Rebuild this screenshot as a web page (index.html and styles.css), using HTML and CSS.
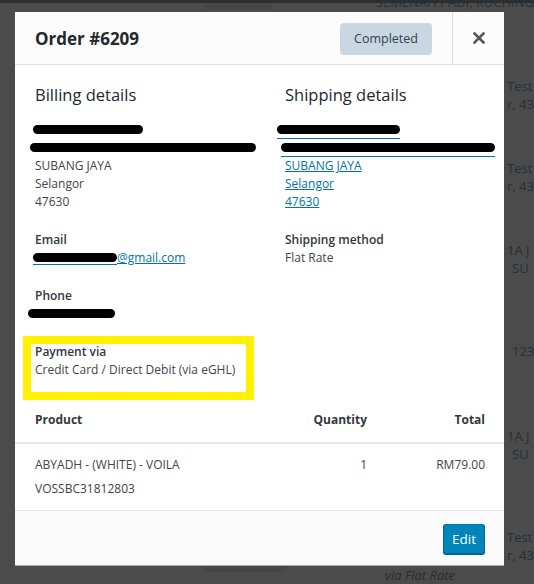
FILE: index.html
```html
<!DOCTYPE html>
<html lang="en">
<head>
    <meta charset="UTF-8">
    <meta name="viewport" content="width=device-width, initial-scale=1.0">
    <title>Order #6209</title>
    <link rel="stylesheet" href="styles.css">
</head>
<body>
    <!-- Orders page behind the overlay -->
    <div class="page">
        <div class="page-top">
            <span class="page-tab"></span>
            <span class="page-addr"><span>SEMENAH PADI, KUCHING</span></span>
        </div>
        <div class="page-list">
            <div class="page-row row-a"><span>Test</span><span>r, 43</span></div>
            <div class="page-row row-a"><span>Test</span><span>r, 43</span></div>
            <div class="page-row row-b"><span>1A J</span><span class="indent">SU</span></div>
            <div class="page-row row-c"><span class="indent">123</span></div>
            <div class="page-row row-b"><span>1A J</span><span class="indent">SU</span></div>
            <div class="page-row"><span>Test</span><span>r, 43</span></div>
        </div>
        <div class="page-bottom">
            <span class="page-tab"></span>
            <em class="page-via">via Flat Rate</em>
        </div>
    </div>

    <!-- Order preview modal -->
    <div class="modal">
        <header class="modal-header">
            <h1>Order #6209</h1>
            <span class="status">Completed</span>
            <button class="close" aria-label="Close">
                <svg width="12" height="12" viewBox="0 0 12 12">
                    <path d="M1.5 1.5 L10.5 10.5 M10.5 1.5 L1.5 10.5" stroke="#50575e" stroke-width="2.6" stroke-linecap="square"/>
                </svg>
            </button>
        </header>

        <div class="modal-body">
            <div class="addresses">
                <div class="address">
                    <h2>Billing details</h2>
                    <div class="lines">
                        <span class="redact redact-name"></span>
                        <span class="redact redact-street"></span>
                        <span>SUBANG JAYA</span>
                        <span>Selangor</span>
                        <span>47630</span>
                    </div>

                    <div class="field">
                        <strong>Email</strong>
                        <span class="value"><span class="redact redact-mail"></span><a href="#">@gmail.com</a></span>
                    </div>

                    <div class="field">
                        <strong>Phone</strong>
                        <span class="value"><span class="redact redact-phone"></span></span>
                    </div>

                    <div class="field payment">
                        <strong>Payment via</strong>
                        <span>Credit Card / Direct Debit (via eGHL)</span>
                        <div class="highlight"></div>
                    </div>
                </div>

                <div class="address">
                    <h2>Shipping details</h2>
                    <div class="lines">
                        <span class="redact redact-ship-name"></span>
                        <span class="redact redact-ship-street"></span>
                        <a href="#">SUBANG JAYA</a>
                        <a href="#">Selangor</a>
                        <a href="#">47630</a>
                    </div>

                    <div class="field">
                        <strong>Shipping method</strong>
                        <span>Flat Rate</span>
                    </div>
                </div>
            </div>
        </div>

        <div class="items">
            <div class="items-row items-head">
                <span>Product</span>
                <span class="num">Quantity</span>
                <span class="num">Total</span>
            </div>
            <div class="items-row">
                <div>
                    <div>ABYADH - (WHITE) - VOILA</div>
                    <div>VOSSBC31812803</div>
                </div>
                <span class="num">1</span>
                <span class="num">RM79.00</span>
            </div>
        </div>

        <footer class="modal-footer">
            <button class="edit">Edit</button>
        </footer>
    </div>
</body>
</html>
```

FILE: styles.css
```css
* {
    box-sizing: border-box;
}
body {
    margin: 0;
    width: 534px;
    height: 584px;
    overflow: hidden;
    position: relative;
    background: #4b4b4b;
    font-family: "Open Sans", "Noto Sans", sans-serif;
    font-size: 12px;
    color: #444;
}

/* background page */
.page {
    height: 584px;
    color: #24313a;
    font-size: 13px;
    white-space: nowrap;
}
.page-top {
    height: 12px;
    border-top: 3px solid #2c2e30;
    display: flex;
}
.page-tab {
    width: 82px;
    height: 7px;
    margin-left: 205px;
    background: #464646;
    border-radius: 0 0 4px 4px;
}
.page-addr {
    margin-left: 104px;
    position: relative;
    top: -7px;
    line-height: 13px;
}
.page-list {
    height: 553px;
    padding: 65px 0 0 507px;
}
.page-row {
    display: flex;
    flex-direction: column;
    line-height: 18px;
}
.row-a { margin-bottom: 46px; }
.row-b { margin-bottom: 65px; }
.row-c { margin-bottom: 67px; }
.indent {
    padding-left: 5px;
}
.page-bottom {
    height: 19px;
    display: flex;
    align-items: flex-start;
}
.page-via {
    margin-left: 98px;
    margin-top: 2px;
    line-height: 17px;
    color: #2b2b2b;
}

/* modal */
.modal {
    position: absolute;
    left: 15px;
    top: 12px;
    width: 489px;
    height: 553px;
    background: #fff;
    display: flex;
    flex-direction: column;
    box-shadow: 0 1px 0 #aaa;
}
.modal-header {
    height: 53px;
    display: flex;
    align-items: center;
    background: #fcfcfc;
    border-bottom: 1px solid #ddd;
    padding-left: 20px;
}
.modal-header h1 {
    flex: 1;
    margin: 0;
    font-size: 17px;
    font-weight: 700;
    color: #23282d;
}
.status {
    background: #c8d7e1;
    color: #2e4453;
    border-radius: 4px;
    padding: 0 14px;
    font-size: 12.5px;
    line-height: 32px;
    height: 32px;
    margin-right: 20px;
    margin-top: 2px;
}
.close {
    width: 52px;
    height: 53px;
    border: none;
    border-left: 1px solid #ddd;
    background: none;
    padding: 0;
    display: flex;
    align-items: center;
    justify-content: center;
}

.modal-body {
    padding: 18px 20px 0;
}
.addresses {
    display: grid;
    grid-template-columns: 250px 1fr;
}
h2 {
    margin: 0 0 13px;
    font-size: 16.5px;
    line-height: 24px;
    font-weight: 400;
    color: #23282d;
}
.lines, .field {
    display: flex;
    flex-direction: column;
    align-items: flex-start;
    line-height: 18px;
}
.lines {
    padding-top: 1px;
}
.field {
    margin-top: 20px;
}
.field strong {
    font-weight: 600;
    color: #32373c;
}
.value {
    display: flex;
    height: 18px;
}
a {
    color: #0073aa;
    text-decoration: underline;
}

/* marker scribbles over personal data */
.redact {
    display: block;
    height: 18px;
    position: relative;
    flex: none;
}
.redact::after {
    content: "";
    position: absolute;
    left: 0;
    right: 0;
    top: 4px;
    height: 9px;
    background: #000;
    border-radius: 5px;
}
.redact-name { width: 110px; margin-left: -2px; }
.redact-street { width: 226px; margin-left: -5px; }
.redact-mail { width: 84px; margin-left: -2px; border-bottom: 1px solid #0073aa; height: 16px; }
.redact-phone { width: 87px; margin-left: -7px; }
.redact-ship-name { width: 123px; margin-left: -8px; }
.redact-ship-street { width: 214px; margin-left: -4px; }
.redact-ship-name, .redact-ship-street {
    border-bottom: 1px solid #0073aa;
}

.payment {
    position: relative;
}
.highlight {
    position: absolute;
    left: -12px;
    top: -7px;
    width: 231px;
    height: 64px;
    border: 8px solid #fff200;
}

/* line items */
.items {
    margin-top: 20px;
}
.items-row {
    display: grid;
    grid-template-columns: 1fr 100px 118px;
    padding: 9px 19px 9px 20px;
    line-height: 24px;
    border-bottom: 1px solid #e5e5e5;
}
.items-head {
    padding: 9px 19px 10px 20px;
    font-weight: 700;
    color: #32373c;
    border-bottom: 2px solid #e8e8e8;
}
.num {
    text-align: right;
}

.modal-footer {
    flex: 1;
    background: #fafafa;
    display: flex;
    justify-content: flex-end;
    align-items: flex-start;
    padding: 13px 19px 0 0;
}
.edit {
    height: 30px;
    padding: 0 8px;
    font-family: inherit;
    font-size: 13.5px;
    color: #fff;
    background: #0085ba;
    border: 1px solid #0073aa;
    border-color: #0073aa #006799 #006799;
    border-radius: 3px;
    box-shadow: 0 1px 0 #006799;
}
```
